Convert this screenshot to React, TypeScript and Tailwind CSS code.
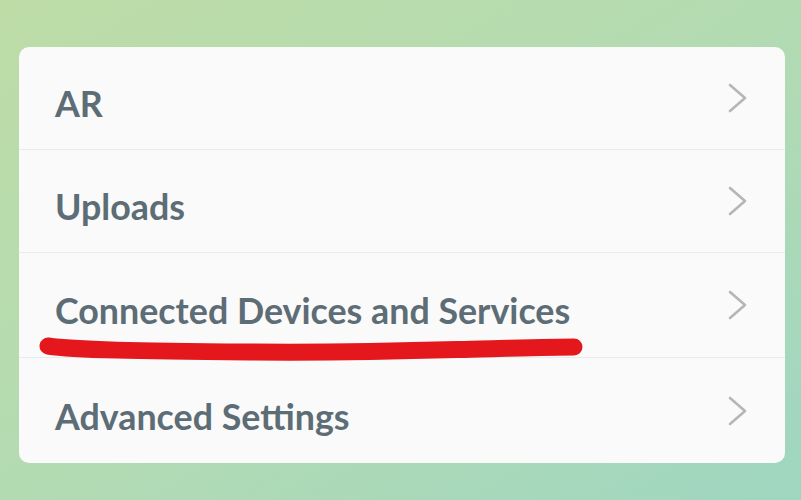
const items = [
  { label: 'AR', h: 'h-[103px]' },
  { label: 'Uploads', h: 'h-[103px]' },
  { label: 'Connected Devices and Services', h: 'h-[105px]' },
  { label: 'Advanced Settings', h: 'h-[105px]' },
];

function Chevron() {
  return (
    <svg width="20" height="30" viewBox="0 0 20 30" className="shrink-0">
      <polyline points="2,2 17,15 2,28" fill="none" stroke="#b5b6b7" strokeWidth="2.6" strokeLinecap="round" strokeLinejoin="round" />
    </svg>
  );
}

export default function App() {
  return (
    <div
      className="w-[801px] h-[500px] overflow-hidden bg-gradient-to-br from-[#bddca6] via-[#b3dbb2] to-[#9fd6c0] pt-[47px] pl-[19px] pr-[16px]"
      style={{ fontFamily: 'Lato, "Open Sans", sans-serif' }}
    >
      <div className="relative">
        <div className="rounded-[10px] bg-[#fafafa] divide-y divide-[#e9eaea] overflow-hidden">
          {items.map((it) => (
            <div key={it.label} className={`${it.h} flex items-center justify-between pl-[36px] pr-[37px]`}>
              <span className="text-[35.8px] font-bold text-[#5d6d76] mt-[12px]">{it.label}</span>
              <Chevron />
            </div>
          ))}
        </div>
        <svg className="absolute left-0 top-0 pointer-events-none" width="770" height="420" viewBox="0 0 770 420">
          <path
            d="M29 299 C 55 303, 120 304, 231 305 S 420 303, 461 302 S 535 300, 555 300"
            fill="none"
            stroke="#e3171c"
            strokeWidth="17"
            strokeLinecap="round"
          />
        </svg>
      </div>
    </div>
  );
}
